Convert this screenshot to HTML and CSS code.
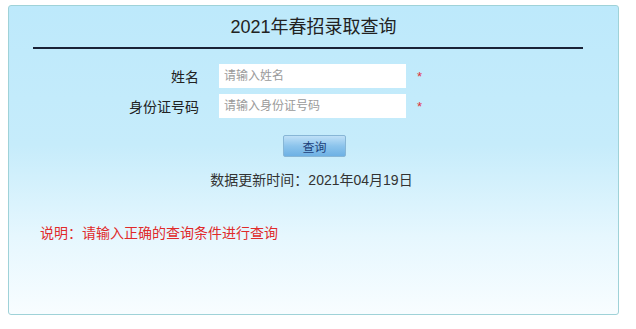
FILE: index.html
```html
<!DOCTYPE html>
<html lang="zh-CN">
<head>
  <meta charset="UTF-8">
  <title>2021年春招录取查询</title>
  <link rel="stylesheet" href="styles.css">
</head>
<body>
  <div class="panel">
    <div class="title">2021年春招录取查询</div>
    <div class="rule"></div>

    <form class="form">
      <div class="row">
        <label class="label">姓名</label>
        <input class="field" type="text" placeholder="请输入姓名">
        <span class="req">*</span>
      </div>
      <div class="row">
        <label class="label">身份证号码</label>
        <input class="field" type="text" placeholder="请输入身份证号码">
        <span class="req">*</span>
      </div>
      <div class="actions">
        <button class="btn" type="button">查询</button>
      </div>
    </form>

    <div class="update">数据更新时间：2021年04月19日</div>
    <div class="note">说明：请输入正确的查询条件进行查询</div>
  </div>
</body>
</html>
```

FILE: styles.css
```css
* {
  margin: 0;
  padding: 0;
  box-sizing: border-box;
}

body {
  font-family: "Liberation Sans", "Noto Sans CJK SC", sans-serif;
  background: #fff;
  padding: 5px 17px 14px 8px;
}

.panel {
  height: 310px;
  border: 1px solid #9fd2d8;
  border-radius: 3px;
  background: linear-gradient(180deg, #bde9fb 0%, #c6ecfb 45%, #e6f7fe 75%, #f8fdff 100%);
  padding: 9px 24px 0;
}

.title {
  text-align: center;
  font-size: 18px;
  color: #222;
  line-height: 24px;
}

.rule {
  height: 2px;
  background: #1a2236;
  margin: 8px 11px 0 0;
}

.form {
  margin-top: 15px;
}

.row {
  display: flex;
  align-items: center;
  height: 24px;
  margin-bottom: 6px;
}

.label {
  width: 166px;
  text-align: right;
  font-size: 14px;
  color: #222;
}

.field {
  margin-left: 20px;
  width: 187px;
  height: 24px;
  border: none;
  background: #fff;
  padding: 0 5px;
  font-size: 12px;
  font-family: inherit;
  outline: none;
}

.field::placeholder {
  color: #9a9a9a;
}

.req {
  margin-left: 11px;
  color: #e0303a;
  font-size: 13px;
}

.actions {
  margin-top: 17px;
  padding-left: 250px;
}

.btn {
  width: 63px;
  height: 22px;
  border: 1px solid #87b6d6;
  border-radius: 2px;
  background: linear-gradient(180deg, #bfe0f7 0%, #8cc4ec 50%, #6eb1e4 100%);
  font-size: 12px;
  color: #1d3f7a;
  font-family: inherit;
}

.update {
  margin-top: 12px;
  text-align: center;
  font-size: 14px;
  color: #333;
  padding-right: 4px;
}

.note {
  margin-top: 33px;
  padding-left: 7px;
  font-size: 14px;
  color: #e02a2a;
}
```
